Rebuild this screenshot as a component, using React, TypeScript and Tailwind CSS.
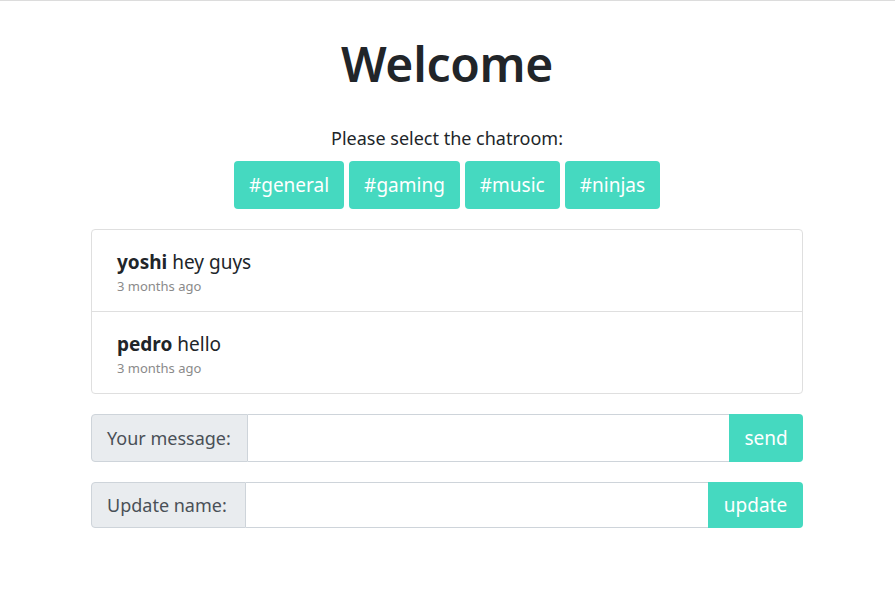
import React from 'react';

const rooms = ['#general', '#gaming', '#music', '#ninjas'];

const messages = [
    { name: 'yoshi', text: 'hey guys', time: '3 months ago' },
    { name: 'pedro', text: 'hello', time: '3 months ago' },
];

function App() {
    return (
        <div
            className="min-h-[597px] bg-white border-t border-[#dcdcdc] text-[#212529]"
            style={{ fontFamily: '"Noto Sans", "Open Sans", sans-serif' }}
        >
            <div className="w-[712px] ml-[91px] pt-[27px]">
                <h1 className="text-center text-[48px] font-semibold leading-[72px] tracking-[-0.3px]">Welcome</h1>

                <p className="text-center text-[18px] leading-[26px] mt-[25px]">Please select the chatroom:</p>
                <div className="flex justify-center gap-[5px] mt-[10px]">
                    {rooms.map((room) => (
                        <button
                            key={room}
                            className="h-[48px] px-[15px] pb-[1px] rounded-[4px] bg-[#45d9c0] text-white text-[19px] leading-[28px] flex items-center"
                        >
                            {room}
                        </button>
                    ))}
                </div>

                <ul className="mt-[20px] border border-[#dfdfdf] rounded-[4px]">
                    {messages.map((m, i) => (
                        <li
                            key={m.name}
                            className={`pl-[25px] pt-[19px] ${i > 0 ? 'h-[82px] border-t border-[#dfdfdf]' : 'h-[81px]'}`}
                        >
                            <div className="text-[19px] leading-[26px]">
                                <span className="font-bold">{m.name}</span> {m.text}
                            </div>
                            <div className="text-[13px] leading-[18px] mt-[2px] text-[#8a8a8a]">{m.time}</div>
                        </li>
                    ))}
                </ul>

                <form className="flex mt-[20px] h-[48px]">
                    <span className="flex items-center whitespace-nowrap px-[15px] w-[157px] bg-[#e9ecef] border border-[#ced4da] rounded-l-[4px] text-[18px] text-[#495057]">
                        Your message:
                    </span>
                    <input className="flex-1 min-w-0 border-y border-[#ced4da] outline-none px-3" />
                    <button type="button" className="w-[74px] bg-[#45d9c0] text-white text-[19px] rounded-r-[4px]">
                        send
                    </button>
                </form>

                <form className="flex mt-[20px] h-[46px]">
                    <span className="flex items-center whitespace-nowrap px-[15px] w-[155px] bg-[#e9ecef] border border-[#ced4da] rounded-l-[4px] text-[18px] text-[#495057]">
                        Update name:
                    </span>
                    <input className="flex-1 min-w-0 border-y border-[#ced4da] outline-none px-3" />
                    <button type="button" className="w-[95px] bg-[#45d9c0] text-white text-[19px] rounded-r-[4px]">
                        update
                    </button>
                </form>
            </div>
        </div>
    );
}

export default App;
